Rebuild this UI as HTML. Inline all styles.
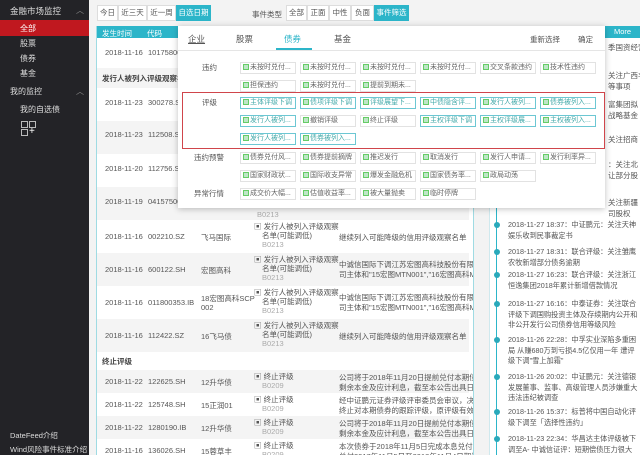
<!DOCTYPE html>
<html><head><meta charset="utf-8"><style>
*{margin:0;padding:0;box-sizing:border-box}
body{width:640px;height:455px;overflow:hidden;background:#f3f3f3;font-family:"Liberation Sans","Noto Sans CJK SC",sans-serif;font-size:7.5px;color:#555;position:relative}
.abs{position:absolute;white-space:nowrap}
#side{left:0;top:0;width:89px;height:455px;background:#232327}
#side .abs{color:#ddd;font-size:8px}
.btn{position:absolute;top:5px;height:16px;border:1px solid #ddd;background:#fff;color:#555;font-size:7.5px;line-height:14px;text-align:center}
.tb{background:#2cb5c9;color:#fff;border-color:#2cb5c9}
#tbl{left:96px;top:26px;width:378px;height:429px;background:#fff;border-left:1px solid #9fdbe3;border-right:1px solid #9fdbe3;overflow:hidden}
.row{position:absolute;left:0;width:372px}
.row span{position:absolute;white-space:nowrap}
.g{background:#f4f4f4}
#rp{left:489px;top:26px;width:151px;height:429px;background:#fff;border-left:1px solid #cfe9ee;overflow:hidden}
#dd{left:178px;top:26px;width:427px;height:182px;background:#fff;box-shadow:0 1px 6px rgba(0,0,0,.25)}
.tag{position:absolute;height:12px;width:56px;border:1px solid #e2e2e2;font-size:7px;line-height:10px;padding-left:2px;color:#666;white-space:nowrap;overflow:hidden}
.tag i{display:inline-block;width:6px;height:6px;background:#bfe6c8;border:1px solid #6c6;margin-right:1px;vertical-align:-1px}
.tag.s{border-color:#6cc7d3;color:#4aa}
.lbl{position:absolute;font-size:7.5px;color:#555}
.it{position:absolute;left:18px;width:132px;font-size:7.2px;line-height:10.5px;white-space:normal;color:#555}
.it:before{content:"";position:absolute;left:-14px;top:2px;width:6px;height:6px;border-radius:3px;background:#2aa9bb}
</style></head><body>
<div id="side" class="abs">
<div class="abs" style="left:10px;top:5px;font-size:8.5px">金融市场监控</div>
<div class="abs" style="left:76px;top:5px;color:#888">︿</div>
<div class="abs" style="left:0;top:20px;width:89px;height:16px;background:#c0181f"></div>
<div class="abs" style="left:20px;top:23px;color:#fff">全部</div>
<div class="abs" style="left:20px;top:38px">股票</div>
<div class="abs" style="left:20px;top:53px">债券</div>
<div class="abs" style="left:20px;top:68px">基金</div>
<div class="abs" style="left:10px;top:86px">我的监控</div>
<div class="abs" style="left:76px;top:86px;color:#888">︿</div>
<div class="abs" style="left:20px;top:104px">我的自选债</div>
<div class="abs" style="left:21px;top:121px;width:7px;height:7px;border:1px solid #bbb"></div>
<div class="abs" style="left:29px;top:121px;width:7px;height:7px;border:1px solid #bbb"></div>
<div class="abs" style="left:21px;top:129px;width:7px;height:7px;border:1px solid #bbb"></div>
<div class="abs" style="left:29px;top:126px;color:#fff;font-size:10px">+</div>
<div class="abs" style="left:10px;top:430px;font-size:7.5px">DateFeed介绍</div>
<div class="abs" style="left:10px;top:444px;font-size:7.5px">Wind风险事件标准介绍</div>
</div>
<div class="btn" style="left:97px;width:21px">今日</div>
<div class="btn" style="left:118px;width:29px">近三天</div>
<div class="btn" style="left:147px;width:29px">近一周</div>
<div class="btn tb" style="left:176px;width:35px">自选日期</div>
<div class="abs" style="left:252px;top:9px">事件类型</div>
<div class="btn" style="left:286px;width:21px">全部</div>
<div class="btn" style="left:307px;width:22px">正面</div>
<div class="btn" style="left:329px;width:22px">中性</div>
<div class="btn" style="left:351px;width:23px">负面</div>
<div class="btn tb" style="left:374px;width:35px">事件筛选</div>

<div id="tbl" class="abs">
<div class="row" style="top:0;height:12px;background:#2cb5c9;color:#fff;width:380px"><span style="left:5px;top:2px">发生时间</span><span style="left:50px;top:2px">代码</span></div>
<div class="row" style="top:12px;height:30px"><span style="left:8px;top:10px">2018-11-16</span><span style="left:51px;top:10px">10175800</span></div>
<div class="row g" style="top:42px;height:20px"><span style="left:5px;top:5px;font-weight:bold;color:#444">发行人被列入评级观察名单</span></div>
<div class="row" style="top:62px;height:33px"><span style="left:8px;top:10px">2018-11-23</span><span style="left:51px;top:10px">300278.SZ</span></div>
<div class="row g" style="top:95px;height:33px"><span style="left:8px;top:9px">2018-11-23</span><span style="left:51px;top:9px">112508.SZ</span></div>
<div class="row" style="top:128px;height:33px"><span style="left:8px;top:10px">2018-11-20</span><span style="left:51px;top:10px">112756.SZ</span></div>
<div class="row g" style="top:161px;height:33px"><span style="left:8px;top:10px">2018-11-19</span><span style="left:51px;top:10px">04157500</span><span style="left:160px;top:23px;color:#aaa">B0213</span></div>
<div class="row" style="top:194px;height:33px"><span style="left:8px;top:12px">2018-11-16</span><span style="left:51px;top:12px">002210.SZ</span><span style="left:104px;top:12px">飞马国际</span><span style="left:157px;top:1px">▣ 发行人被列入评级观察</span><span style="left:165px;top:10px">名单(可能调低)</span><span style="left:165px;top:20px;color:#aaa">B0213</span><span style="left:242px;top:12px">继续列入可能降级的信用评级观察名单</span></div>
<div class="row g" style="top:227px;height:33px"><span style="left:8px;top:12px">2018-11-16</span><span style="left:51px;top:12px">600122.SH</span><span style="left:104px;top:12px">宏图高科</span><span style="left:157px;top:1px">▣ 发行人被列入评级观察</span><span style="left:165px;top:10px">名单(可能调低)</span><span style="left:165px;top:20px;color:#aaa">B0213</span><span style="left:242px;top:6px">中诚信国际下调江苏宏图高科技股份有限公</span><span style="left:242px;top:16px">司主体和"15宏图MTN001","16宏图高科M...</span></div>
<div class="row" style="top:260px;height:33px"><span style="left:8px;top:12px">2018-11-16</span><span style="left:51px;top:12px">011800353.IB</span><span style="left:104px;top:7px">18宏图高科SCP</span><span style="left:104px;top:17px">002</span><span style="left:157px;top:1px">▣ 发行人被列入评级观察</span><span style="left:165px;top:10px">名单(可能调低)</span><span style="left:165px;top:20px;color:#aaa">B0213</span><span style="left:242px;top:6px">中诚信国际下调江苏宏图高科技股份有限公</span><span style="left:242px;top:16px">司主体和"15宏图MTN001","16宏图高科M...</span></div>
<div class="row g" style="top:293px;height:33px"><span style="left:8px;top:12px">2018-11-16</span><span style="left:51px;top:12px">112422.SZ</span><span style="left:104px;top:12px">16飞马债</span><span style="left:157px;top:1px">▣ 发行人被列入评级观察</span><span style="left:165px;top:10px">名单(可能调低)</span><span style="left:165px;top:20px;color:#aaa">B0213</span><span style="left:242px;top:12px">继续列入可能降级的信用评级观察名单</span></div>
<div class="row" style="top:326px;height:18px"><span style="left:5px;top:4px;font-weight:bold;color:#444">终止评级</span></div>
<div class="row g" style="top:344px;height:23px"><span style="left:8px;top:7px">2018-11-22</span><span style="left:51px;top:7px">122625.SH</span><span style="left:104px;top:7px">12升华债</span><span style="left:157px;top:1px">▣ 终止评级</span><span style="left:165px;top:11px;color:#aaa">B0209</span><span style="left:242px;top:2px">公司将于2018年11月20日提前兑付本期债券</span><span style="left:242px;top:12px">剩余本金及应计利息，截至本公告出具日，...</span></div>
<div class="row" style="top:367px;height:23px"><span style="left:8px;top:7px">2018-11-22</span><span style="left:51px;top:7px">125748.SH</span><span style="left:104px;top:7px">15正润01</span><span style="left:157px;top:1px">▣ 终止评级</span><span style="left:165px;top:11px;color:#aaa">B0209</span><span style="left:242px;top:2px">经中证鹏元证券评级评审委员会审议，决定</span><span style="left:242px;top:12px">终止对本期债券的跟踪评级，原评级有效期...</span></div>
<div class="row g" style="top:390px;height:23px"><span style="left:8px;top:7px">2018-11-22</span><span style="left:51px;top:7px">1280190.IB</span><span style="left:104px;top:7px">12升华债</span><span style="left:157px;top:1px">▣ 终止评级</span><span style="left:165px;top:11px;color:#aaa">B0209</span><span style="left:242px;top:2px">公司将于2018年11月20日提前兑付本期债券</span><span style="left:242px;top:12px">剩余本金及应计利息，截至本公告出具日，...</span></div>
<div class="row" style="top:413px;height:23px"><span style="left:8px;top:7px">2018-11-16</span><span style="left:51px;top:7px">136026.SH</span><span style="left:104px;top:7px">15蓉草丰</span><span style="left:157px;top:1px">▣ 终止评级</span><span style="left:165px;top:11px;color:#aaa">B0209</span><span style="left:242px;top:2px">本次债券于2018年11月5日完成本息兑付，</span><span style="left:242px;top:12px">兑付2017年11月5日至2018年11月4日期间...</span></div>
<div class="abs" style="left:371px;top:40px;width:5px;height:140px;background:#ddd"></div>
</div>

<div id="rp" class="abs">
<div class="abs" style="left:6px;top:0;width:1px;height:429px;background:#2cb5c9"></div>
<div class="abs" style="left:114px;top:0;width:37px;height:12px;background:#2cb5c9;color:#fff;text-align:center;line-height:12px">More</div>
<div class="abs" style="left:118px;top:16px">季国资经营</div>
<div class="abs" style="left:118px;top:44px">关注广西丰</div><div class="abs" style="left:118px;top:55px">等事项</div>
<div class="abs" style="left:118px;top:73px">富集团拟</div><div class="abs" style="left:118px;top:84px">战略基金</div>
<div class="abs" style="left:118px;top:108px">关注招商</div>
<div class="abs" style="left:118px;top:133px">：关注北</div><div class="abs" style="left:118px;top:144px">让部分股</div>
<div class="abs" style="left:118px;top:171px">关注新疆</div><div class="abs" style="left:118px;top:182px">司股权</div>
<div class="it" style="top:194px">2018-11-27 18:37：中证鹏元：关注天神娱乐收到民事裁定书</div>
<div class="it" style="top:221px">2018-11-27 18:31：联合评级：关注雏鹰农牧新增部分债务逾期</div>
<div class="it" style="top:244px">2018-11-27 16:23：联合评级：关注浙江恒逸集团2018年累计新增借款情况</div>
<div class="it" style="top:273px">2018-11-27 16:16：中泰证券：关注联合评级下调国购投资主体及存续期内公开和非公开发行公司债券信用等级风险</div>
<div class="it" style="top:309px">2018-11-26 22:28：中孚实业深陷多重困局 从赚680万到亏损4.5亿仅用一年 遭评级下调"雪上加霜"</div>
<div class="it" style="top:346px">2018-11-26 20:02：中证鹏元：关注德银发展董事、监事、高级管理人员涉嫌重大违法违纪被调查</div>
<div class="it" style="top:381px">2018-11-26 15:37：标普将中国自动化评级下调至「选择性违约」</div>
<div class="it" style="top:408px">2018-11-23 22:34：华昌达主体评级被下调至A- 中诚信证评：短期偿债压力很大</div>
</div>

<div id="dd" class="abs">
<div class="abs" style="left:0;top:24px;width:427px;height:1px;background:#e5e5e5"></div>
<div class="abs" style="left:10px;top:7px;font-size:8.5px;text-decoration:underline;color:#555">企业</div>
<div class="abs" style="left:58px;top:7px;font-size:8.5px;color:#555">股票</div>
<div class="abs" style="left:106px;top:7px;font-size:8.5px;color:#2cb5c9">债券</div>
<div class="abs" style="left:98px;top:22px;width:36px;height:2px;background:#2cb5c9"></div>
<div class="abs" style="left:156px;top:7px;font-size:8.5px;color:#555">基金</div>
<div class="abs" style="left:352px;top:8px">重新选择</div>
<div class="abs" style="left:400px;top:8px">确定</div>
<div class="lbl" style="left:24px;top:36px">违约</div>
<div class="lbl" style="left:24px;top:71px">评级</div>
<div class="lbl" style="left:16px;top:126px">违约预警</div>
<div class="lbl" style="left:16px;top:162px">异常行情</div>
<div class="abs" style="left:4px;top:66px;width:423px;height:57px;border:1px solid #d0454b"></div>
<div class="tag" style="left:62px;top:36px"><i></i>未按时兑付...</div>
<div class="tag" style="left:122px;top:36px"><i></i>未按时兑付...</div>
<div class="tag" style="left:182px;top:36px"><i></i>未按时兑付...</div>
<div class="tag" style="left:242px;top:36px"><i></i>未按时兑付...</div>
<div class="tag" style="left:302px;top:36px"><i></i>交叉条款违约</div>
<div class="tag" style="left:362px;top:36px"><i></i>技术性违约</div>
<div class="tag" style="left:62px;top:54px"><i></i>担保违约</div>
<div class="tag" style="left:122px;top:54px"><i></i>未按时兑付...</div>
<div class="tag" style="left:182px;top:54px"><i></i>提前到期未...</div>
<div class="tag s" style="left:62px;top:71px"><i></i>主体评级下调</div>
<div class="tag s" style="left:122px;top:71px"><i></i>债项评级下调</div>
<div class="tag s" style="left:182px;top:71px"><i></i>评级展望下...</div>
<div class="tag s" style="left:242px;top:71px"><i></i>中债隐含评...</div>
<div class="tag s" style="left:302px;top:71px"><i></i>发行人被列...</div>
<div class="tag s" style="left:362px;top:71px"><i></i>债券被列入...</div>
<div class="tag s" style="left:62px;top:89px"><i></i>发行人被列...</div>
<div class="tag" style="left:122px;top:89px"><i></i>撤销评级</div>
<div class="tag" style="left:182px;top:89px"><i></i>终止评级</div>
<div class="tag s" style="left:242px;top:89px"><i></i>主权评级下调</div>
<div class="tag s" style="left:302px;top:89px"><i></i>主权评级展...</div>
<div class="tag s" style="left:362px;top:89px"><i></i>主权被列入...</div>
<div class="tag s" style="left:62px;top:107px"><i></i>发行人被列...</div>
<div class="tag s" style="left:122px;top:107px"><i></i>债券被列入...</div>
<div class="tag" style="left:62px;top:126px"><i></i>债券兑付风...</div>
<div class="tag" style="left:122px;top:126px"><i></i>债券提前摘牌</div>
<div class="tag" style="left:182px;top:126px"><i></i>推迟发行</div>
<div class="tag" style="left:242px;top:126px"><i></i>取消发行</div>
<div class="tag" style="left:302px;top:126px"><i></i>发行人申请...</div>
<div class="tag" style="left:362px;top:126px"><i></i>发行利率异...</div>
<div class="tag" style="left:62px;top:144px"><i></i>国家财政状...</div>
<div class="tag" style="left:122px;top:144px"><i></i>国际收支异常</div>
<div class="tag" style="left:182px;top:144px"><i></i>爆发金融危机</div>
<div class="tag" style="left:242px;top:144px"><i></i>国家债务率...</div>
<div class="tag" style="left:302px;top:144px"><i></i>政局动荡</div>
<div class="tag" style="left:62px;top:162px"><i></i>成交价大幅...</div>
<div class="tag" style="left:122px;top:162px"><i></i>估值收益率...</div>
<div class="tag" style="left:182px;top:162px"><i></i>被大量抛卖</div>
<div class="tag" style="left:242px;top:162px"><i></i>临时停牌</div>
</div>
</body></html>
